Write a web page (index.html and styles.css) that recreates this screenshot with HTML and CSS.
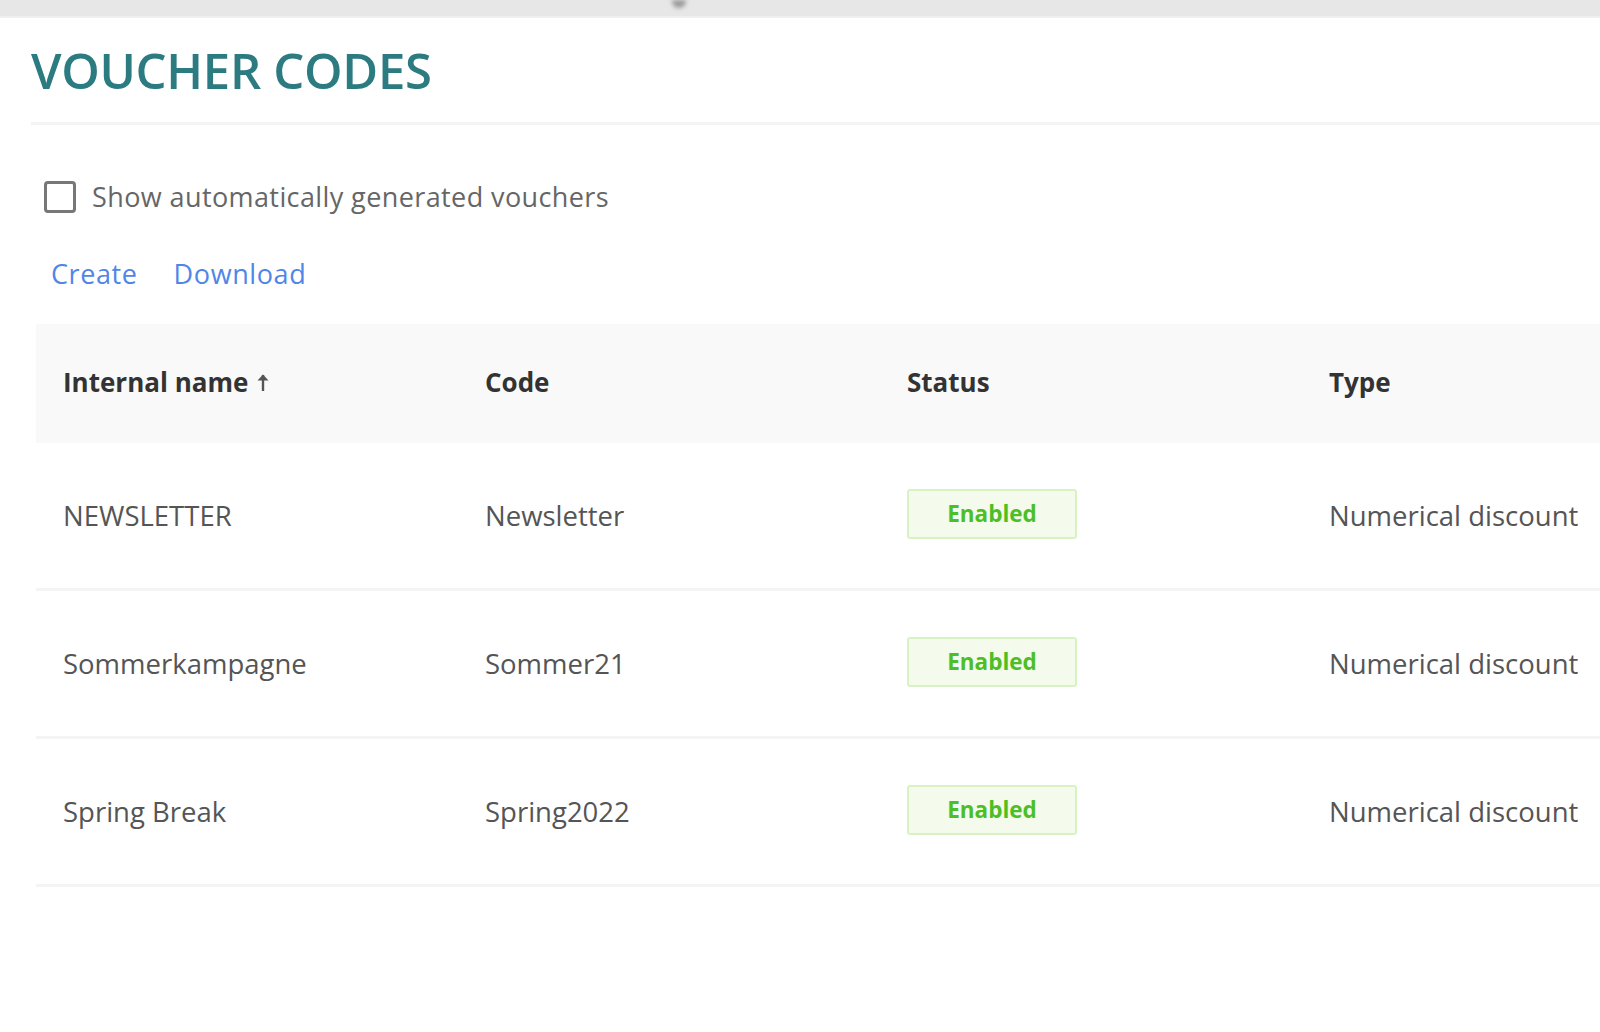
FILE: index.html
```html
<!DOCTYPE html>
<html lang="en">
<head>
    <meta charset="UTF-8">
    <meta name="viewport" content="width=device-width, initial-scale=1.0">
    <title>Voucher codes</title>
    <link rel="stylesheet" href="styles.css">
</head>
<body>
    <div class="topbar">
        <span class="topbar-handle"></span>
    </div>

    <div class="page">
        <h1 class="page-title">VOUCHER CODES</h1>
        <div class="title-rule"></div>

        <label class="auto-toggle">
            <input type="checkbox" class="auto-check">
            <span>Show automatically generated vouchers</span>
        </label>

        <div class="actions">
            <a href="#" class="action-link">Create</a>
            <a href="#" class="action-link">Download</a>
        </div>

        <div class="voucher-table">
            <div class="table-row table-head">
                <div class="cell sortable">
                    <span>Internal name</span>
                    <svg class="sort-arrow" width="14" height="20" viewBox="0 0 14 20">
                        <path d="M7 19V3" stroke="#555" stroke-width="2.4" fill="none"/>
                        <path d="M1.5 8.5L7 2.5l5.5 6z" fill="#555"/>
                    </svg>
                </div>
                <div class="cell">Code</div>
                <div class="cell">Status</div>
                <div class="cell">Type</div>
            </div>
            <div class="table-row">
                <div class="cell">NEWSLETTER</div>
                <div class="cell">Newsletter</div>
                <div class="cell"><span class="badge">Enabled</span></div>
                <div class="cell">Numerical discount</div>
            </div>
            <div class="table-row">
                <div class="cell">Sommerkampagne</div>
                <div class="cell">Sommer21</div>
                <div class="cell"><span class="badge">Enabled</span></div>
                <div class="cell">Numerical discount</div>
            </div>
            <div class="table-row">
                <div class="cell">Spring Break</div>
                <div class="cell">Spring2022</div>
                <div class="cell"><span class="badge">Enabled</span></div>
                <div class="cell">Numerical discount</div>
            </div>
        </div>
    </div>
</body>
</html>
```

FILE: styles.css
```css
body {
    font-family: "Open Sans", "Noto Sans", sans-serif;
    margin: 0;
    padding: 0;
    background-color: #fff;
    color: #555;
    overflow: hidden;
}

.topbar {
    height: 16px;
    background-color: #e7e7e7;
    border-bottom: 2px solid #efefef;
    position: relative;
}

.topbar-handle {
    position: absolute;
    left: 672px;
    top: 0;
    width: 14px;
    height: 8px;
    border-radius: 0 0 7px 7px;
    background-color: #9a9a9a;
    filter: blur(2px);
}

.page {
    padding-left: 31px;
}

.page-title {
    margin: 0;
    padding-top: 22px;
    height: 82px;
    font-size: 49px;
    font-weight: 600;
    color: #2b7b80;
    letter-spacing: -0.3px;
    line-height: 60px;
}

.title-rule {
    height: 3px;
    background-color: #f4f4f4;
}

.auto-toggle {
    display: flex;
    align-items: center;
    gap: 16px;
    margin-top: 53px;
    margin-left: 13px;
    font-size: 27px;
    letter-spacing: 0.4px;
    color: #666;
}

.auto-check {
    appearance: none;
    margin: 0;
    width: 32px;
    height: 32px;
    border: 3px solid #777;
    border-radius: 4px;
    box-sizing: border-box;
    background-color: #fff;
}

.actions {
    display: flex;
    gap: 36px;
    margin-top: 40px;
    margin-left: 20px;
}

.action-link {
    font-size: 27px;
    letter-spacing: 0.6px;
    color: #4f86e8;
    text-decoration: none;
}

.voucher-table {
    margin-top: 32px;
    margin-left: 5px;
}

.table-row {
    display: grid;
    grid-template-columns: 422px 422px 422px 1fr;
    align-items: center;
    height: 145px;
    border-bottom: 3px solid #f4f4f4;
    font-size: 27.5px;
    color: #555;
}

.table-row .cell {
    padding-left: 27px;
    white-space: nowrap;
}

.table-head {
    height: 119px;
    background-color: #f9f9f9;
    border-bottom: none;
    font-weight: 700;
    color: #333;
    font-size: 26px;
    padding-bottom: 4px;
    box-sizing: border-box;
}

.table-head .sortable {
    display: flex;
    align-items: center;
    gap: 8px;
}

.sort-arrow {
    display: block;
}

.badge {
    display: inline-block;
    width: 166px;
    height: 46px;
    line-height: 46px;
    text-align: center;
    background-color: #f4fbec;
    border: 2px solid #d9f2c4;
    border-radius: 3px;
    color: #4cbf26;
    font-size: 22.5px;
    font-weight: 700;
    margin-top: -18px;
}
```
